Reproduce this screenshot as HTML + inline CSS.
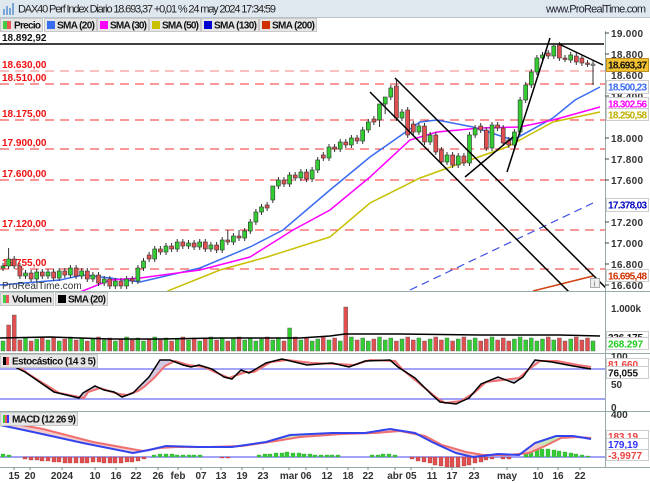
<!DOCTYPE html>
<html><head><meta charset="utf-8"><style>
html,body{margin:0;padding:0;width:650px;height:483px;overflow:hidden;background:#fff}
svg{display:block;font-family:"Liberation Sans",Arial,sans-serif}
</style></head><body>
<svg width="650" height="483" viewBox="0 0 650 483" xmlns="http://www.w3.org/2000/svg">
<defs><clipPath id="cm"><rect x="0" y="31" width="605" height="260"/></clipPath>
<clipPath id="cp"><rect x="0" y="0" width="605" height="483"/></clipPath></defs>
<rect x="0" y="0" width="650" height="17" fill="#dfe7ef"/>
<line x1="0" y1="17.5" x2="650" y2="17.5" stroke="#b8c4d0"/>
<rect x="3" y="9" width="2" height="6" fill="#7aa6d8"/><rect x="6" y="6" width="2" height="9" fill="#7aa6d8"/><rect x="9" y="8" width="2" height="7" fill="#7aa6d8"/><rect x="12" y="3" width="2" height="12" fill="#7aa6d8"/>
<text x="18" y="12.5" font-size="11" fill="#222" textLength="258">DAX40 Perf Index Diario 18.693,37 +0,01 % 24 may 2024 17:34:59</text>
<text x="546" y="12.5" font-size="11" fill="#223" textLength="100">www.ProRealTime.com</text>
<g font-size="10" font-weight="bold" fill="#111">
<rect x="0.5" y="18.5" width="42" height="13" fill="#e6e6e6" stroke="#c8c8c8"/><rect x="3" y="21" width="4" height="8" fill="#4c4"/><rect x="7" y="21" width="4" height="8" fill="#e55"/><text x="14" y="28.5" textLength="27">Precio</text>
<rect x="44.5" y="18.5" width="52" height="13" fill="#e6e6e6" stroke="#c8c8c8"/><rect x="47" y="21" width="8" height="8" fill="#3a6cf0"/><text x="57" y="28.5" textLength="38">SMA (20)</text>
<rect x="97.5" y="18.5" width="51" height="13" fill="#e6e6e6" stroke="#c8c8c8"/><rect x="100" y="21" width="8" height="8" fill="#f0f"/><text x="110" y="28.5" textLength="37">SMA (30)</text>
<rect x="149.5" y="18.5" width="51" height="13" fill="#e6e6e6" stroke="#c8c8c8"/><rect x="152" y="21" width="8" height="8" fill="#c8c000"/><text x="162" y="28.5" textLength="37">SMA (50)</text>
<rect x="201.5" y="18.5" width="57" height="13" fill="#e6e6e6" stroke="#c8c8c8"/><rect x="204" y="21" width="8" height="8" fill="#00c"/><text x="214" y="28.5" textLength="43">SMA (130)</text>
<rect x="259.5" y="18.5" width="57" height="13" fill="#e6e6e6" stroke="#c8c8c8"/><rect x="262" y="21" width="8" height="8" fill="#d03000"/><text x="272" y="28.5" textLength="43">SMA (200)</text>
</g>
<text x="2" y="41" font-size="10" font-weight="bold" fill="#111">18.892,92</text>
<line x1="0" y1="44" x2="604" y2="44" stroke="#000" stroke-width="1.5"/>
<g stroke="#f03030" stroke-width="1" stroke-dasharray="9,6" clip-path="url(#cp)">
<line x1="0" y1="71" x2="605" y2="71" stroke="#f08080"/><line x1="0" y1="84" x2="605" y2="84"/>
<line x1="0" y1="120" x2="605" y2="120"/><line x1="0" y1="149" x2="605" y2="149"/>
<line x1="0" y1="180" x2="605" y2="180"/><line x1="0" y1="230" x2="605" y2="230"/><line x1="0" y1="269" x2="605" y2="269"/>
</g>
<g font-size="10" font-weight="bold" fill="#f01010">
<text x="2" y="68">18.630,00</text><text x="2" y="81">18.510,00</text><text x="2" y="117">18.175,00</text><text x="2" y="146">17.900,00</text><text x="2" y="177">17.600,00</text><text x="2" y="227">17.120,00</text><text x="2" y="266">16.755,00</text>
</g>
<g clip-path="url(#cm)">
<!-- SMAs -->
<g fill="none" stroke-width="1.5">
<polyline stroke="#3a6cf0" points="0,285 60,280 83,275 110,278 140,282 200,268 250,247 283,230 330,190 370,157 420,122 437,120 473,127 513,140 553,118 575,100 600,87"/>
<polyline stroke="#f0f" points="60,300 110,280 140,278 200,270 250,257 293,230 330,210 370,177 410,140 437,132 480,128 520,127 553,120 600,107"/>
<polyline stroke="#c8c000" points="150,300 170,290 220,270 267,257 330,237 370,203 420,178 470,160 507,147 553,122 600,112"/>
<polyline stroke="#4050e0" stroke-width="1.2" stroke-dasharray="8,5" points="410,290 593,203"/>
<polyline stroke="#d04010" points="533,291 593,276"/>
</g>
<!-- wicks -->
<path stroke="#333" stroke-width="1" fill="none" d="M3 263V271M8.6 248V269M14.2 256V269M19.9 263V279M25.5 270V279M31.1 270V282M36.7 269V282M42.3 269V279M48 269V279M53.6 269V281M59.2 268V281M64.8 268V278M70.4 265V278M76.1 265V279M81.7 268V279M87.3 268V282M92.9 272V282M98.5 272V286M104.2 276V286M109.8 276V289M115.4 278V289M121 278V289M126.6 276V289M132.3 276V284M137.9 265V284M143.5 258V271M149.1 252V262M154.7 246V262M160.4 246V255M166 243V255M171.6 243V252M177.2 239V252M182.8 239V249M188.5 240V249M194.1 240V250M199.7 239V250M205.3 239V252M210.9 242V252M216.6 242V253M222.2 237V253M227.8 230V245M233.4 233V245M239 230V241M244.7 228V241M250.3 219V234M255.9 209V225M261.5 204V215M267.1 202V211M272.8 197V203M278.4 177V189M284 177V187M289.6 172V187M295.2 172V181M300.9 169V181M306.5 169V182M312.1 167V182M317.7 157V173M323.3 152V161M329 144V161M334.6 144V152M340.2 139V152M345.8 139V148M351.4 135V148M357.1 135V144M362.7 127V144M368.3 119V133M373.9 116V125M379.5 117V127M385.2 101V114M390.8 85V100M396.4 80V121M402 109V121M407.7 107V138M413.3 121V135M418.9 123V135M424.5 123V145M430.1 132V145M435.8 132V155M441.4 147V165M447 152V165M452.6 152V168M458.2 153V168M463.9 153V166M469.5 132V166M475.1 125V138M480.7 123V133M486.3 127V151M492 122V151M497.6 122V131M503.2 125V146M508.8 137V148M514.4 129V148M520.1 97V135M525.7 82V103M531.3 69V88M536.9 55V75M542.5 52V61M548.2 50V59M553.8 43V59M559.4 42V61M565 55V62M570.7 52V63M576.3 53V65M581.9 55V66M587.5 60V67M593 61V85"/>
<g fill="#3c3" stroke="#333" stroke-width="0.6">
<rect x="1" y="266" width="4" height="2"/><rect x="6.6" y="259" width="4" height="7"/><rect x="23.5" y="273" width="4" height="3"/><rect x="34.7" y="272" width="4" height="7"/><rect x="46" y="272" width="4" height="4"/><rect x="57.2" y="271" width="4" height="7"/><rect x="68.4" y="268" width="4" height="7"/><rect x="79.7" y="271" width="4" height="5"/><rect x="90.9" y="275" width="4" height="4"/><rect x="102.2" y="279" width="4" height="4"/><rect x="113.4" y="281" width="4" height="5"/><rect x="124.6" y="279" width="4" height="7"/><rect x="135.9" y="268" width="4" height="13"/><rect x="141.5" y="261" width="4" height="7"/><rect x="152.7" y="249" width="4" height="10"/><rect x="164" y="246" width="4" height="6"/><rect x="175.2" y="242" width="4" height="7"/><rect x="186.5" y="243" width="4" height="3"/><rect x="197.7" y="242" width="4" height="5"/><rect x="208.9" y="245" width="4" height="4"/><rect x="220.2" y="240" width="4" height="10"/><rect x="231.4" y="236" width="4" height="6"/><rect x="242.7" y="231" width="4" height="7"/><rect x="248.3" y="222" width="4" height="9"/><rect x="253.9" y="212" width="4" height="10"/><rect x="259.5" y="207" width="4" height="5"/><rect x="270.8" y="186" width="4" height="14"/><rect x="276.4" y="180" width="4" height="6"/><rect x="287.6" y="175" width="4" height="9"/><rect x="298.9" y="172" width="4" height="6"/><rect x="310.1" y="170" width="4" height="9"/><rect x="315.7" y="160" width="4" height="10"/><rect x="327" y="147" width="4" height="11"/><rect x="338.2" y="142" width="4" height="7"/><rect x="349.4" y="138" width="4" height="7"/><rect x="360.7" y="130" width="4" height="11"/><rect x="366.3" y="122" width="4" height="8"/><rect x="377.5" y="104" width="4" height="16"/><rect x="383.2" y="97" width="4" height="7"/><rect x="388.8" y="88" width="4" height="9"/><rect x="400" y="112" width="4" height="6"/><rect x="416.9" y="126" width="4" height="6"/><rect x="428.1" y="135" width="4" height="7"/><rect x="445" y="155" width="4" height="7"/><rect x="456.2" y="156" width="4" height="9"/><rect x="467.5" y="135" width="4" height="28"/><rect x="473.1" y="128" width="4" height="7"/><rect x="490" y="125" width="4" height="23"/><rect x="512.4" y="132" width="4" height="13"/><rect x="518.1" y="100" width="4" height="32"/><rect x="523.7" y="85" width="4" height="15"/><rect x="529.3" y="72" width="4" height="13"/><rect x="534.9" y="58" width="4" height="14"/><rect x="540.5" y="55" width="4" height="3"/><rect x="551.8" y="46" width="4" height="10"/><rect x="568.7" y="55" width="4" height="5"/>
</g>
<g fill="#e05050" stroke="#333" stroke-width="0.6">
<rect x="12.2" y="259" width="4" height="7"/><rect x="17.9" y="266" width="4" height="10"/><rect x="29.1" y="273" width="4" height="6"/><rect x="40.3" y="272" width="4" height="4"/><rect x="51.6" y="272" width="4" height="6"/><rect x="62.8" y="271" width="4" height="4"/><rect x="74.1" y="268" width="4" height="8"/><rect x="85.3" y="271" width="4" height="8"/><rect x="96.5" y="275" width="4" height="8"/><rect x="107.8" y="279" width="4" height="7"/><rect x="119" y="281" width="4" height="5"/><rect x="130.3" y="279" width="4" height="2"/><rect x="147.1" y="255" width="4" height="4"/><rect x="158.4" y="249" width="4" height="3"/><rect x="169.6" y="246" width="4" height="3"/><rect x="180.8" y="242" width="4" height="4"/><rect x="192.1" y="243" width="4" height="4"/><rect x="203.3" y="242" width="4" height="7"/><rect x="214.6" y="245" width="4" height="5"/><rect x="225.8" y="240" width="4" height="2"/><rect x="237" y="236" width="4" height="2"/><rect x="265.1" y="205" width="4" height="3"/><rect x="282" y="180" width="4" height="4"/><rect x="293.2" y="175" width="4" height="3"/><rect x="304.5" y="172" width="4" height="7"/><rect x="321.3" y="155" width="4" height="3"/><rect x="332.6" y="147" width="4" height="2"/><rect x="343.8" y="142" width="4" height="3"/><rect x="355.1" y="138" width="4" height="3"/><rect x="371.9" y="119" width="4" height="3"/><rect x="394.4" y="86" width="4" height="32"/><rect x="405.7" y="110" width="4" height="25"/><rect x="411.3" y="124" width="4" height="8"/><rect x="422.5" y="126" width="4" height="16"/><rect x="433.8" y="135" width="4" height="17"/><rect x="439.4" y="150" width="4" height="12"/><rect x="450.6" y="155" width="4" height="10"/><rect x="461.9" y="156" width="4" height="7"/><rect x="478.7" y="126" width="4" height="4"/><rect x="484.3" y="130" width="4" height="18"/><rect x="495.6" y="125" width="4" height="3"/><rect x="501.2" y="128" width="4" height="15"/><rect x="506.8" y="140" width="4" height="5"/><rect x="546.2" y="53" width="4" height="3"/><rect x="557.4" y="45" width="4" height="13"/><rect x="563" y="58" width="4" height="1.5"/><rect x="574.3" y="56" width="4" height="6"/><rect x="579.9" y="58" width="4" height="5"/><rect x="585.5" y="63" width="4" height="1.5"/>
</g>
<rect x="591" y="64" width="4" height="1.5" fill="#999" stroke="#555" stroke-width="0.6"/>
<g stroke="#000" stroke-width="1.5">
<line x1="370" y1="92" x2="577" y2="300"/><line x1="395" y1="78" x2="610" y2="292"/>
<line x1="465" y1="177" x2="513" y2="137"/><line x1="507" y1="172" x2="550" y2="38"/><line x1="559" y1="44" x2="603" y2="65"/>
</g>
</g>
<text x="2" y="289" font-size="10" fill="#333">ProRealTime.com</text>
<rect x="590.5" y="278.5" width="9" height="9" fill="#eee" stroke="#aaa"/><text x="593.5" y="286.5" font-size="8" fill="#777">i</text>
<g stroke="#9aa" stroke-width="1">
<line x1="0" y1="291.5" x2="650" y2="291.5"/><line x1="0" y1="353.5" x2="650" y2="353.5"/><line x1="0" y1="411.5" x2="650" y2="411.5"/><line x1="0" y1="467.5" x2="650" y2="467.5"/>
<line x1="605.5" y1="31" x2="605.5" y2="467"/>
</g>
<!-- volume -->
<g fill="#3c3" stroke="#555" stroke-width="0.4">
<rect x="1" y="341" width="4" height="10"/><rect x="23.5" y="338" width="4" height="13"/><rect x="34.7" y="339" width="4" height="12"/><rect x="46" y="340" width="4" height="11"/><rect x="57.2" y="341" width="4" height="10"/><rect x="68.4" y="337" width="4" height="14"/><rect x="79.7" y="338" width="4" height="13"/><rect x="90.9" y="339" width="4" height="12"/><rect x="102.2" y="340" width="4" height="11"/><rect x="113.4" y="341" width="4" height="10"/><rect x="124.6" y="337" width="4" height="14"/><rect x="135.9" y="338" width="4" height="13"/><rect x="141.5" y="341" width="4" height="10"/><rect x="152.7" y="337" width="4" height="14"/><rect x="164" y="338" width="4" height="13"/><rect x="175.2" y="339" width="4" height="12"/><rect x="186.5" y="340" width="4" height="11"/><rect x="197.7" y="341" width="4" height="10"/><rect x="208.9" y="337" width="4" height="14"/><rect x="220.2" y="338" width="4" height="13"/><rect x="231.4" y="339" width="4" height="12"/><rect x="242.7" y="340" width="4" height="11"/><rect x="248.3" y="338" width="4" height="13"/><rect x="253.9" y="341" width="4" height="10"/><rect x="259.5" y="339" width="4" height="12"/><rect x="270.8" y="340" width="4" height="11"/><rect x="276.4" y="338" width="4" height="13"/><rect x="287.6" y="328" width="4" height="23"/><rect x="298.9" y="340" width="4" height="11"/><rect x="310.1" y="341" width="4" height="10"/><rect x="315.7" y="339" width="4" height="12"/><rect x="327" y="340" width="4" height="11"/><rect x="338.2" y="341" width="4" height="10"/><rect x="349.4" y="337" width="4" height="14"/><rect x="360.7" y="338" width="4" height="13"/><rect x="366.3" y="341" width="4" height="10"/><rect x="377.5" y="337" width="4" height="14"/><rect x="383.2" y="340" width="4" height="11"/><rect x="388.8" y="338" width="4" height="13"/><rect x="400" y="339" width="4" height="12"/><rect x="416.9" y="338" width="4" height="13"/><rect x="428.1" y="339" width="4" height="12"/><rect x="445" y="338" width="4" height="13"/><rect x="456.2" y="339" width="4" height="12"/><rect x="467.5" y="340" width="4" height="11"/><rect x="473.1" y="338" width="4" height="13"/><rect x="490" y="337" width="4" height="14"/><rect x="512.4" y="339" width="4" height="12"/><rect x="518.1" y="337" width="4" height="14"/><rect x="523.7" y="340" width="4" height="11"/><rect x="529.3" y="338" width="4" height="13"/><rect x="534.9" y="341" width="4" height="10"/><rect x="540.5" y="339" width="4" height="12"/><rect x="551.8" y="340" width="4" height="11"/><rect x="568.7" y="339" width="4" height="12"/><rect x="591" y="341" width="4" height="10"/>
</g>
<g fill="#e05050" stroke="#555" stroke-width="0.4">
<rect x="6.6" y="325" width="4" height="26"/><rect x="12.2" y="315" width="4" height="36"/><rect x="17.9" y="340" width="4" height="11"/><rect x="29.1" y="341" width="4" height="10"/><rect x="40.3" y="337" width="4" height="14"/><rect x="51.6" y="338" width="4" height="13"/><rect x="62.8" y="339" width="4" height="12"/><rect x="74.1" y="340" width="4" height="11"/><rect x="85.3" y="341" width="4" height="10"/><rect x="96.5" y="337" width="4" height="14"/><rect x="107.8" y="338" width="4" height="13"/><rect x="119" y="339" width="4" height="12"/><rect x="130.3" y="340" width="4" height="11"/><rect x="147.1" y="339" width="4" height="12"/><rect x="158.4" y="340" width="4" height="11"/><rect x="169.6" y="341" width="4" height="10"/><rect x="180.8" y="337" width="4" height="14"/><rect x="192.1" y="338" width="4" height="13"/><rect x="203.3" y="339" width="4" height="12"/><rect x="214.6" y="340" width="4" height="11"/><rect x="225.8" y="341" width="4" height="10"/><rect x="237" y="337" width="4" height="14"/><rect x="265.1" y="337" width="4" height="14"/><rect x="282" y="341" width="4" height="10"/><rect x="293.2" y="337" width="4" height="14"/><rect x="304.5" y="338" width="4" height="13"/><rect x="321.3" y="337" width="4" height="14"/><rect x="332.6" y="338" width="4" height="13"/><rect x="343.8" y="307" width="4" height="44"/><rect x="355.1" y="340" width="4" height="11"/><rect x="371.9" y="339" width="4" height="12"/><rect x="394.4" y="341" width="4" height="10"/><rect x="405.7" y="337" width="4" height="14"/><rect x="411.3" y="340" width="4" height="11"/><rect x="422.5" y="341" width="4" height="10"/><rect x="433.8" y="337" width="4" height="14"/><rect x="439.4" y="340" width="4" height="11"/><rect x="450.6" y="341" width="4" height="10"/><rect x="461.9" y="337" width="4" height="14"/><rect x="478.7" y="341" width="4" height="10"/><rect x="484.3" y="339" width="4" height="12"/><rect x="495.6" y="340" width="4" height="11"/><rect x="501.2" y="338" width="4" height="13"/><rect x="506.8" y="341" width="4" height="10"/><rect x="546.2" y="337" width="4" height="14"/><rect x="557.4" y="338" width="4" height="13"/><rect x="563" y="341" width="4" height="10"/><rect x="574.3" y="337" width="4" height="14"/><rect x="579.9" y="340" width="4" height="11"/><rect x="585.5" y="338" width="4" height="13"/>
</g>
<polyline fill="none" stroke="#000" stroke-width="1.5" points="0,338 50,337 110,339 160,339 220,338 300,338 330,336 345,334 400,334 480,335 560,335 600,336"/>
<!-- stochastic -->
<line x1="0" y1="369" x2="605" y2="369" stroke="#6a6af0" stroke-width="1.2"/>
<line x1="0" y1="399" x2="605" y2="399" stroke="#6a6af0" stroke-width="1.2"/>
<polygon fill="#c8bcdc" opacity="0.8" points="12,360 17,368 25,372 54,392 79,398 83,393 95,386 104,390 114,392 122,397 133,393 139,387 149,377 160,360 170,360 183,365 191,367 199,365 212,369 224,377 232,379 241,370 249,373 266,363 282,359 307,365 332,363 349,367 365,361 390,360 398,367 415,378 432,395 440,402 456,404 469,398 481,384 498,377 514,383 523,377 535,360 552,362 573,366 591,369 591,367 578,365 557,361 540,361 528,370 519,378 503,380 486,382 474,393 461,401 445,403 437,398 420,384 403,370 395,361 370,360 354,365 337,364 312,363 287,360 271,362 254,372 246,372 237,375 229,378 217,373 204,367 196,366 188,365 175,361 165,366 154,378 144,387 138,391 127,395 119,394 109,391 100,388 88,392 84,398 59,393 30,375 22,369 17,364"/>
<polyline fill="none" stroke="#f07070" stroke-width="2" points="17,364 22,369 30,375 59,393 84,398 88,392 100,388 109,391 119,394 127,395 138,391 144,387 154,378 165,366 175,361 188,365 196,366 204,367 217,373 229,378 237,375 246,372 254,372 271,362 287,360 312,363 337,364 354,365 370,360 395,361 403,370 420,384 437,398 445,403 461,401 474,393 486,382 503,380 519,378 528,370 540,361 557,361 578,365 591,367"/>
<polyline fill="none" stroke="#000" stroke-width="1.5" points="12,360 17,368 25,372 54,392 79,398 83,393 95,386 104,390 114,392 122,397 133,393 139,387 149,377 160,360 170,360 183,365 191,367 199,365 212,369 224,377 232,379 241,370 249,373 266,363 282,359 307,365 332,363 349,367 365,361 390,360 398,367 415,378 432,395 440,402 456,404 469,398 481,384 498,377 514,383 523,377 535,360 552,362 573,366 591,369"/>
<!-- MACD -->
<line x1="0" y1="457" x2="605" y2="457" stroke="#6a6af0" stroke-width="1.2"/>
<polygon fill="#f0b0b0" opacity="0.65" points="0,425 33,432 83,443 133,453 149,450 166,446 199,447 232,447 266,442 290,435 332,433 365,433 390,429 415,433 432,442 456,453 473,457 498,454 519,455 535,443 556,436 573,436 591,439 591,438 578,437 561,438 545,446 529,453 508,455 483,455 466,452 442,445 425,436 400,431 375,433 342,434 300,437 276,441 242,446 209,447 176,447 159,448 143,451 93,442 43,429 10,423"/>
<polygon fill="#b8f0b0" opacity="0.8" points="535,443 556,436 573,436 591,439 578,437 561,438 545,446"/>
<polygon fill="#b8f0b0" opacity="0.8" points="266,442 290,435 332,433 342,434 300,437 276,441"/>
<g fill="#e05050" stroke="#933" stroke-width="0.3">
<rect x="23" y="457" width="4" height="2"/><rect x="29" y="457" width="4" height="3"/><rect x="35" y="457" width="4" height="3"/><rect x="40" y="457" width="4" height="4"/><rect x="46" y="457" width="4" height="4"/><rect x="52" y="457" width="4" height="5"/><rect x="57" y="457" width="4" height="5"/><rect x="63" y="457" width="4" height="6"/><rect x="68" y="457" width="4" height="6"/><rect x="74" y="457" width="4" height="6"/><rect x="80" y="457" width="4" height="6"/><rect x="85" y="457" width="4" height="6"/><rect x="91" y="457" width="4" height="5"/><rect x="97" y="457" width="4" height="5"/><rect x="102" y="457" width="4" height="6"/><rect x="108" y="457" width="4" height="6"/><rect x="113" y="457" width="4" height="6"/><rect x="119" y="457" width="4" height="6"/><rect x="125" y="457" width="4" height="5"/><rect x="130" y="457" width="4" height="5"/><rect x="136" y="457" width="4" height="4"/><rect x="142" y="457" width="4" height="2"/><rect x="220" y="457" width="4" height="1"/><rect x="226" y="457" width="4" height="1"/>
<rect x="410" y="457" width="4" height="2"/><rect x="416" y="457" width="4" height="4"/><rect x="422" y="457" width="4" height="5"/><rect x="428" y="457" width="4" height="6"/><rect x="433" y="457" width="4" height="8"/><rect x="439" y="457" width="4" height="9"/><rect x="445" y="457" width="4" height="10"/><rect x="450" y="457" width="4" height="10"/><rect x="456" y="457" width="4" height="10"/><rect x="462" y="457" width="4" height="9"/><rect x="467" y="457" width="4" height="8"/><rect x="473" y="457" width="4" height="6"/><rect x="479" y="457" width="4" height="5"/><rect x="484" y="457" width="4" height="3"/><rect x="490" y="457" width="4" height="2"/><rect x="501" y="457" width="4" height="2"/><rect x="507" y="457" width="4" height="2"/>
</g>
<g fill="#3c3" stroke="#393" stroke-width="0.3">
<rect x="1" y="454" width="4" height="3"/><rect x="7" y="455" width="4" height="2"/><rect x="152" y="455" width="4" height="2"/><rect x="158" y="454" width="4" height="3"/><rect x="164" y="454" width="4" height="3"/><rect x="170" y="454" width="4" height="3"/><rect x="175" y="455" width="4" height="2"/><rect x="181" y="455" width="4" height="2"/><rect x="187" y="455" width="4" height="2"/><rect x="192" y="455" width="4" height="2"/><rect x="198" y="455" width="4" height="2"/>
<rect x="257" y="455" width="4" height="2"/><rect x="263" y="454" width="4" height="3"/><rect x="268" y="454" width="4" height="3"/><rect x="274" y="453" width="4" height="4"/><rect x="280" y="453" width="4" height="4"/><rect x="285" y="452" width="4" height="5"/><rect x="291" y="453" width="4" height="4"/><rect x="297" y="453" width="4" height="4"/><rect x="302" y="454" width="4" height="3"/><rect x="308" y="454" width="4" height="3"/><rect x="313" y="455" width="4" height="2"/><rect x="319" y="455" width="4" height="2"/><rect x="325" y="455" width="4" height="2"/><rect x="330" y="455" width="4" height="2"/><rect x="336" y="455" width="4" height="2"/><rect x="370" y="455" width="4" height="2"/><rect x="376" y="455" width="4" height="2"/><rect x="381" y="454" width="4" height="3"/><rect x="387" y="454" width="4" height="3"/><rect x="393" y="455" width="4" height="2"/>
<rect x="524" y="454" width="4" height="3"/><rect x="529" y="452" width="4" height="5"/><rect x="535" y="450" width="4" height="7"/><rect x="540" y="449" width="4" height="8"/><rect x="546" y="449" width="4" height="8"/><rect x="552" y="450" width="4" height="7"/><rect x="557" y="451" width="4" height="6"/><rect x="563" y="452" width="4" height="5"/><rect x="569" y="453" width="4" height="4"/><rect x="574" y="454" width="4" height="3"/><rect x="580" y="455" width="4" height="2"/><rect x="586" y="456" width="4" height="1"/>
</g>
<polyline fill="none" stroke="#f07070" stroke-width="2" points="10,423 43,429 93,442 143,451 159,448 176,447 209,447 242,446 276,441 300,437 342,434 375,433 400,431 425,436 442,445 466,452 483,455 508,455 529,453 545,446 561,438 578,437 591,438"/>
<polyline fill="none" stroke="#3344ee" stroke-width="2" points="0,425 33,432 83,443 133,453 149,450 166,446 199,447 232,447 266,442 290,435 332,433 365,433 390,429 415,433 432,442 456,453 473,457 498,454 519,455 535,443 556,436 573,436 591,439"/>
<!-- panel legends -->
<g font-size="10" font-weight="bold" fill="#111">
<rect x="0.5" y="292.5" width="53" height="13" fill="#e6e6e6" stroke="#c8c8c8"/><rect x="3" y="295" width="3" height="8" fill="#4c4"/><rect x="6" y="295" width="3" height="8" fill="#e55"/><text x="12" y="302.5" textLength="40">Volumen</text>
<rect x="55.5" y="292.5" width="52" height="13" fill="#e6e6e6" stroke="#c8c8c8"/><rect x="58" y="295" width="8" height="8" fill="#000"/><text x="68" y="302.5" textLength="38">SMA (20)</text>
<rect x="0.5" y="354.5" width="97" height="13" fill="#e6e6e6" stroke="#c8c8c8"/><rect x="3" y="357" width="3" height="8" fill="#000"/><rect x="6" y="357" width="3" height="8" fill="#e55"/><text x="12" y="364.5" textLength="84">Estocástico (14 3 5)</text>
<rect x="0.5" y="412.5" width="77" height="13" fill="#e6e6e6" stroke="#c8c8c8"/><rect x="3" y="415" width="2" height="8" fill="#4c4"/><rect x="5" y="415" width="2" height="8" fill="#e55"/><rect x="7" y="415" width="2" height="8" fill="#33f"/><text x="12" y="422.5" textLength="64">MACD (12 26 9)</text>
</g>
<!-- right axis -->
<g font-size="10" font-weight="bold" fill="#333">
<g stroke="#444"><line x1="605" y1="33" x2="609" y2="33"/><line x1="605" y1="54" x2="609" y2="54"/><line x1="605" y1="96" x2="609" y2="96"/><line x1="605" y1="138" x2="609" y2="138"/><line x1="605" y1="159" x2="609" y2="159"/><line x1="605" y1="180" x2="609" y2="180"/><line x1="605" y1="222" x2="609" y2="222"/><line x1="605" y1="243" x2="609" y2="243"/><line x1="605" y1="264" x2="609" y2="264"/><line x1="605" y1="285" x2="609" y2="285"/></g>
<text x="611" y="37" textLength="32">19.000</text><text x="611" y="58" textLength="32">18.800</text><text x="611" y="79" textLength="32">18.600</text><text x="611" y="100" textLength="32">18.400</text><text x="611" y="142" textLength="32">18.000</text><text x="611" y="163" textLength="32">17.800</text><text x="611" y="184" textLength="32">17.600</text><text x="611" y="226" textLength="32">17.200</text><text x="611" y="247" textLength="32">17.000</text><text x="611" y="268" textLength="32">16.800</text><text x="611" y="289" textLength="32">16.600</text>
<rect x="606.5" y="58.5" width="42" height="13" fill="#f3c230" stroke="#c09020"/><text x="608" y="68.5" fill="#111" textLength="39">18.693,37</text>
<rect x="606.5" y="80.5" width="42" height="13" fill="#fff" stroke="#ccc"/><text x="608" y="90.5" fill="#3a6cf0" textLength="39">18.500,23</text>
<rect x="606.5" y="97.5" width="42" height="12" fill="#fff" stroke="#ccc"/><text x="608" y="107.5" fill="#f0f" textLength="39">18.302,56</text>
<rect x="606.5" y="108.5" width="42" height="12" fill="#fff" stroke="#ccc"/><text x="608" y="118.5" fill="#c0b000" textLength="39">18.250,58</text>
<rect x="606.5" y="198.5" width="42" height="13" fill="#fff" stroke="#ccc"/><text x="608" y="208.5" fill="#0000c0" textLength="39">17.378,03</text>
<rect x="606.5" y="269.5" width="42" height="12" fill="#fff" stroke="#ccc"/><text x="608" y="279.5" fill="#d03000" textLength="39">16.695,48</text>
<text x="611" y="312" textLength="30">1.000k</text>
<rect x="606.5" y="331.5" width="42" height="11" fill="#fff" stroke="#ccc"/><text x="608" y="341" fill="#111" textLength="35">336.175</text>
<rect x="606.5" y="337.5" width="42" height="12" fill="#fff" stroke="#ccc"/><text x="608" y="347.5" fill="#2c2" textLength="35">268.297</text>
<text x="611" y="360">100</text>
<rect x="606.5" y="358.5" width="42" height="11" fill="#fff" stroke="#ccc"/><text x="608" y="368" fill="#e44" textLength="30">81,660</text>
<rect x="606.5" y="366.5" width="42" height="12" fill="#fff" stroke="#ccc"/><text x="608" y="376.5" fill="#111" textLength="30">76,055</text>
<text x="611" y="388">50</text><text x="611" y="411">0</text>
<text x="611" y="418">400</text>
<rect x="606.5" y="430.5" width="42" height="11" fill="#fff" stroke="#ccc"/><text x="608" y="440" fill="#e44" textLength="30">183,19</text>
<rect x="606.5" y="438.5" width="42" height="11" fill="#fff" stroke="#ccc"/><text x="608" y="448" fill="#33f" textLength="30">179,19</text>
<rect x="606.5" y="449.5" width="42" height="11" fill="#fff" stroke="#ccc"/><text x="608" y="459" fill="#e44" textLength="34">-3,9977</text>
</g>
<!-- date axis -->
<g stroke="#888"><path d="M14 467v3M30 467v3M62 467v3M95 467v3M116 467v3M136 467v3M158 467v3M178 467v3M201 467v3M221 467v3M242 467v3M263 467v3M289 467v3M306 467v3M327 467v3M348 467v3M368 467v3M395 467v3M411 467v3M432 467v3M452 467v3M474 467v3M507 467v3M538 467v3M558 467v3M580 467v3"/></g>
<g font-size="10" font-weight="bold" fill="#333" text-anchor="middle">
<text x="14" y="479">15</text><text x="30" y="479">20</text><text x="62" y="479">2024</text><text x="95" y="479">10</text><text x="116" y="479">16</text><text x="136" y="479">22</text><text x="158" y="479">26</text><text x="178" y="479">feb</text><text x="201" y="479">07</text><text x="221" y="479">13</text><text x="242" y="479">19</text><text x="263" y="479">23</text><text x="289" y="479">mar</text><text x="306" y="479">06</text><text x="327" y="479">12</text><text x="348" y="479">18</text><text x="368" y="479">22</text><text x="395" y="479">abr</text><text x="411" y="479">05</text><text x="432" y="479">11</text><text x="452" y="479">17</text><text x="474" y="479">23</text><text x="507" y="479">may</text><text x="538" y="479">10</text><text x="558" y="479">16</text><text x="580" y="479">22</text>
</g>
</svg>
</body></html>
